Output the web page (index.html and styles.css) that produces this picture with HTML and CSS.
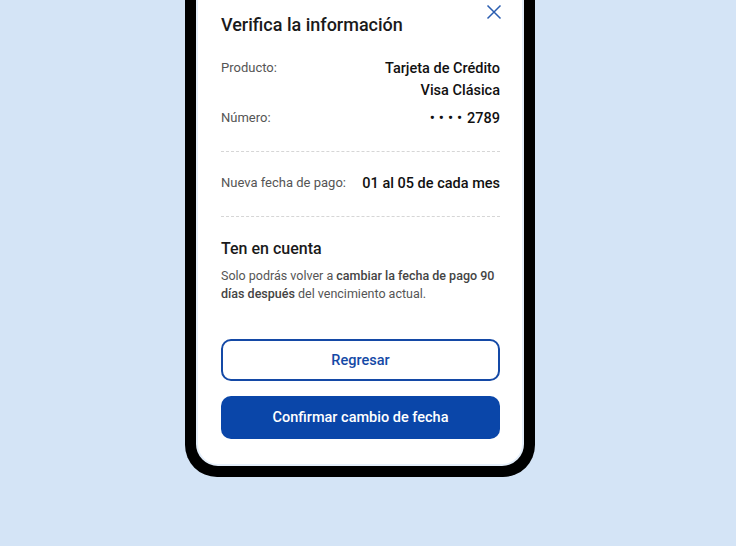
FILE: index.html
```html
<!DOCTYPE html>
<html lang="es">

<head>
  <meta charset="UTF-8" />
  <meta name="viewport" content="width=device-width, initial-scale=1.0" />
  <title>Verifica la información</title>
  <link rel="stylesheet" href="styles.css">
</head>

<body>
  <div class="phone">
    <div class="screen">
      <div class="header">
        <h1 class="title">Verifica la información</h1>
        <button class="close" aria-label="Cerrar">
          <svg width="16" height="16" viewBox="0 0 16 16">
            <path d="M1.5 1.5 L14.5 14.5 M14.5 1.5 L1.5 14.5" stroke="#2a5db0" stroke-width="1.5" fill="none" />
          </svg>
        </button>
      </div>

      <div class="row first">
        <span class="label">Producto:</span>
        <span class="value">Tarjeta de Crédito<br>Visa Clásica</span>
      </div>
      <div class="row">
        <span class="label">Número:</span>
        <span class="value"><span class="dots">••••</span>2789</span>
      </div>

      <div class="divider"></div>

      <div class="row">
        <span class="label">Nueva fecha de pago:</span>
        <span class="value">01 al 05 de cada mes</span>
      </div>

      <div class="divider"></div>

      <h2 class="subtitle">Ten en cuenta</h2>
      <p class="note">Solo podrás volver a <b>cambiar la fecha de pago 90 días después</b> del vencimiento actual.</p>

      <div class="actions">
        <button class="btn btn-outline">Regresar</button>
        <button class="btn btn-primary">Confirmar cambio de fecha</button>
      </div>
    </div>
  </div>
</body>

</html>
```

FILE: styles.css
```css
* {
  margin: 0;
  padding: 0;
  box-sizing: border-box;
}

body {
  background-color: #d4e4f6;
  font-family: Roboto, "Liberation Sans", Arial, sans-serif;
  color: #1a1a1a;
}

.phone {
  width: 350px;
  margin: -40px 0 0 185px;
  padding: 11px;
  background-color: #000;
  border-radius: 32px;
}

.screen {
  background-color: #fff;
  border: 2px solid #e4eefa;
  border-radius: 22px;
  padding: 31px 22px 25px 23px;
}

.header {
  display: flex;
  justify-content: space-between;
  align-items: flex-start;
}

.title {
  margin-top: 9px;
  font-size: 18px;
  line-height: 24px;
  font-weight: 500;
}

.close {
  border: none;
  background: none;
  width: 16px;
  height: 16px;
  margin-right: -2px;
  cursor: pointer;
}

.close svg {
  display: block;
}

/* filas de datos */
.row {
  display: flex;
  justify-content: space-between;
  align-items: flex-start;
  margin-top: 6px;
}

.row.first {
  margin-top: 21px;
}

.label {
  font-size: 13px;
  line-height: 20px;
  color: #555;
}

.value {
  font-size: 14.5px;
  line-height: 22px;
  font-weight: 500;
  color: #111;
  text-align: right;
}

.dots {
  letter-spacing: 4px;
  margin-right: 1px;
}

.divider {
  border-top: 1px dashed #d6d6d6;
  margin: 21px 0;
}

.subtitle {
  font-size: 16px;
  line-height: 22px;
  font-weight: 500;
}

.note {
  margin-top: 7px;
  font-size: 12.5px;
  line-height: 18px;
  color: #555;
}

.note b {
  font-weight: 500;
  color: #444;
}

.actions {
  display: flex;
  flex-direction: column;
  gap: 15px;
  margin-top: 36px;
}

.btn {
  height: 42px;
  border-radius: 10px;
  font-family: inherit;
  font-size: 14.5px;
  font-weight: 500;
  cursor: pointer;
}

.btn-outline {
  background-color: #fff;
  border: 2px solid #1449a6;
  color: #1449a6;
}

.btn-primary {
  height: 43px;
  background-color: #0a46a9;
  border: none;
  color: #fff;
}
```
